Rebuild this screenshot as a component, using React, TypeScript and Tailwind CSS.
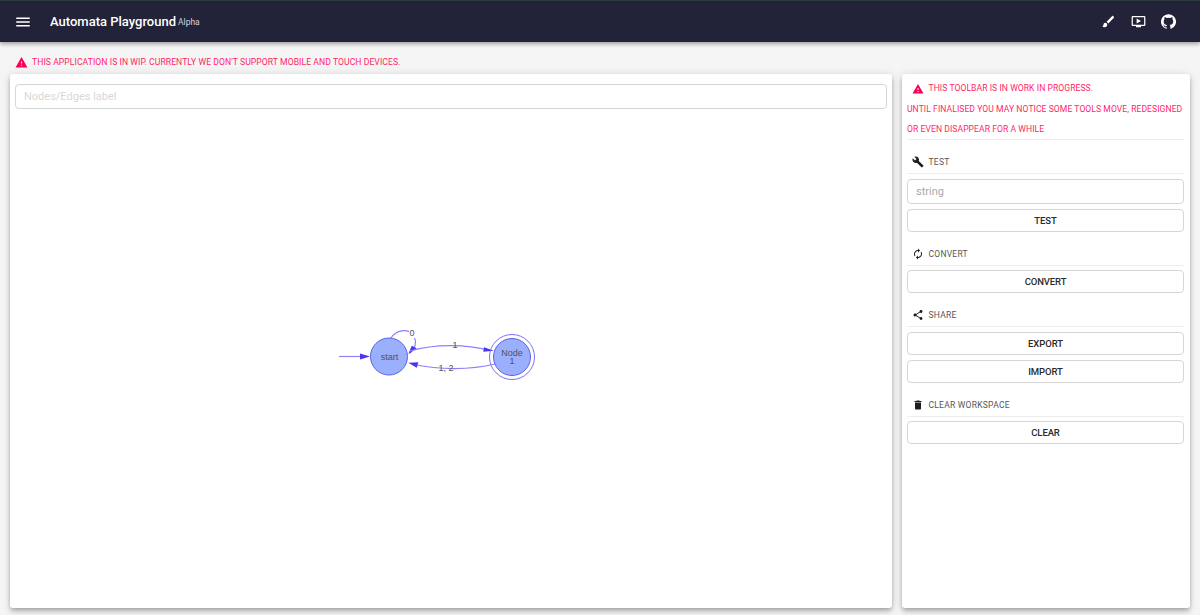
const paths = {
  menu: 'M3 18h18v-2H3v2zm0-5h18v-2H3v2zm0-7v2h18V6H3z',
  warning: 'M1 21h22L12 2 1 21zm12-3h-2v-2h2v2zm0-4h-2v-4h2v4z',
  brush:
    'M7 14c-1.66 0-3 1.34-3 3 0 1.31-1.16 2-2 2 .92 1.22 2.49 2 4 2 2.21 0 4-1.79 4-4 0-1.66-1.34-3-3-3zm13.71-9.37l-1.34-1.34c-.39-.39-1.02-.39-1.41 0L9 12.25 11.75 15l8.96-8.96c.39-.39.39-1.02 0-1.41z',
  video:
    'M21 3H3c-1.11 0-2 .89-2 2v12c0 1.1.89 2 2 2h5v2h8v-2h5c1.1 0 1.99-.9 1.99-2L23 5c0-1.11-.9-2-2-2zm0 14H3V5h18v12zm-5-6l-7 4V7z',
  github:
    'M12 .3a12 12 0 0 0-3.8 23.4c.6.1.8-.3.8-.6v-2c-3.3.7-4-1.6-4-1.6-.6-1.4-1.4-1.8-1.4-1.8-1-.7.1-.7.1-.7 1.2 0 1.9 1.2 1.9 1.2 1 1.8 2.8 1.3 3.5 1 0-.8.4-1.3.7-1.6-2.7-.3-5.5-1.3-5.5-6 0-1.2.5-2.3 1.3-3.1-.2-.4-.6-1.6 0-3.2 0 0 1-.3 3.4 1.2a11.5 11.5 0 0 1 6 0c2.3-1.5 3.3-1.2 3.3-1.2.6 1.6.2 2.8 0 3.2.9.8 1.3 1.9 1.3 3.2 0 4.6-2.8 5.6-5.5 5.9.5.4.9 1 .9 2.2v3.3c0 .3.1.7.8.6A12 12 0 0 0 12 .3',
  build:
    'M22.7 19l-9.1-9.1c.9-2.3.4-5-1.5-6.9-2-2-5-2.4-7.4-1.3L9 6 6 9 1.6 4.7C.4 7.1.9 10.1 2.9 12.1c1.9 1.9 4.6 2.4 6.9 1.5l9.1 9.1c.4.4 1 .4 1.4 0l2.3-2.3c.5-.4.5-1.1.1-1.4z',
  autorenew:
    'M12 6v3l4-4-4-4v3c-4.42 0-8 3.58-8 8 0 1.57.46 3.03 1.24 4.26L6.7 14.8c-.45-.83-.7-1.79-.7-2.8 0-3.31 2.69-6 6-6zm6.76 1.74L17.3 9.2c.44.84.7 1.79.7 2.8 0 3.31-2.69 6-6 6v-3l-4 4 4 4v-3c4.42 0 8-3.58 8-8 0-1.57-.46-3.03-1.24-4.26z',
  share:
    'M18 16.08c-.76 0-1.44.3-1.96.77L8.91 12.7c.05-.23.09-.46.09-.7s-.04-.47-.09-.7l7.05-4.11c.54.5 1.25.81 2.04.81 1.66 0 3-1.34 3-3s-1.34-3-3-3-3 1.34-3 3c0 .24.04.47.09.7L8.04 9.81C7.5 9.31 6.79 9 6 9c-1.66 0-3 1.34-3 3s1.34 3 3 3c.79 0 1.5-.31 2.04-.81l7.12 4.16c-.05.21-.08.43-.08.65 0 1.61 1.31 2.92 2.92 2.92 1.61 0 2.92-1.31 2.92-2.92s-1.31-2.92-2.92-2.92z',
  trash: 'M6 19c0 1.1.9 2 2 2h8c1.1 0 2-.9 2-2V7H6v12zM19 4h-3.5l-1-1h-5l-1 1H5v2h14V4z'
}

function Icon({ d, className }: { d: string; className: string }): React.JSX.Element {
  return (
    <svg viewBox="0 0 24 24" fill="currentColor" className={className}>
      <path d={d} />
    </svg>
  )
}

function Header(): React.JSX.Element {
  return (
    <header className="relative flex h-[42px] shrink-0 items-center border-t border-[#2c3a3c] bg-[#222339] pl-[14px] pr-[24px] text-white shadow-[0_2px_4px_rgba(0,0,0,0.35)]">
      <Icon d={paths.menu} className="h-[18px] w-[18px]" />
      <span className="ml-[18px] text-[13px] font-medium">Automata Playground</span>
      <span className="ml-[2px] pt-[1px] text-[8.5px] text-gray-300">Alpha</span>
      <div className="ml-auto flex items-center gap-[15px]">
        <Icon d={paths.brush} className="h-[15px] w-[15px]" />
        <Icon d={paths.video} className="h-[15px] w-[15px]" />
        <Icon d={paths.github} className="h-[15px] w-[15px]" />
      </div>
    </header>
  )
}

function Graph(): React.JSX.Element {
  const edge = '#8f80fb'
  const head = '#4a35ee'
  return (
    <svg viewBox="0 0 220 70" className="absolute left-[320px] top-[246px] h-[70px] w-[220px] font-['Liberation_Sans',sans-serif]">
      <path d="M9 36.5 H34" stroke={edge} strokeWidth="1.2" fill="none" />
      <path d="M30 33.5 L40 36.5 L30 39.5 Z" fill={head} />
      <path d="M61 18 C 66 10 78 8 83 15 C 87 21 86 28 80 33" stroke={edge} strokeWidth="1.2" fill="none" />
      <path d="M81.7 25.7 L86.7 28.3 L78.3 34.3 Z" fill={head} />
      <path d="M80 31 C 105 24 135 24 160 30.5" stroke={edge} strokeWidth="1.2" fill="none" />
      <path d="M154 27.3 L164 30.7 L153.3 31.7 Z" fill={head} />
      <path d="M165 44 C 140 50 110 50 84 44.5" stroke={edge} strokeWidth="1.2" fill="none" />
      <path d="M88.3 42.3 L78.3 42.7 L86.7 47.7 Z" fill={head} />
      <circle cx="59" cy="36.5" r="18.5" fill="#9bb0fc" stroke="#5f5fe6" strokeWidth="1" />
      <circle cx="182" cy="37" r="18.5" fill="#9bb0fc" stroke="#5f5fe6" strokeWidth="1" />
      <circle cx="182" cy="37" r="22.5" fill="none" stroke="#7e70f6" strokeWidth="1" />
      <g fill="#4d5260" fontSize="9" textAnchor="middle">
        <text x="59.5" y="39.5">start</text>
        <text x="182" y="35.5">Node</text>
        <text x="182" y="44">1</text>
        <rect x="79" y="8" width="6" height="10" fill="#fff" />
        <text x="82" y="16">0</text>
        <text x="125" y="28">1</text>
        <text x="116" y="51">1, 2</text>
      </g>
    </svg>
  )
}

function Section({
  icon,
  label,
  className = 'mt-[10px]'
}: {
  icon: string
  label: string
  className?: string
}): React.JSX.Element {
  return (
    <div className={`flex h-[24px] items-center border-b border-[#eeeeee] pl-[5px] ${className}`}>
      <Icon d={icon} className="h-[12px] w-[12px] text-[#1d1d1d]" />
      <span className="ml-[4.5px] pt-[1px] text-[8.5px] tracking-[0.25px] text-[#555555]">{label}</span>
    </div>
  )
}

function ToolButton({ label, className }: { label: string; className: string }): React.JSX.Element {
  return (
    <button className={`flex h-[23px] w-full items-center justify-center rounded-[4px] border border-[#d6d6d6] bg-white pt-[1px] text-[9.5px] font-medium tracking-[-0.1px] text-[#2a2a2a] ${className}`}>
      {label}
    </button>
  )
}

const elevation =
  'shadow-[0_2px_4px_-1px_rgba(0,0,0,0.2),0_4px_5px_0_rgba(0,0,0,0.14),0_1px_10px_0_rgba(0,0,0,0.12)]'

export default function App(): React.JSX.Element {
  return (
    <div className="flex h-[615px] w-[1200px] flex-col overflow-hidden bg-[#f5f5f5] font-['Roboto',sans-serif]">
      <Header />
      <div className="flex h-[32px] shrink-0 items-center pl-[15px] pt-[8px]">
        <Icon d={paths.warning} className="h-[13px] w-[13px] text-[#ff0055]" />
        <span className="ml-[4px] text-[8.6px] tracking-[0.07px] text-[#ff1f66]">
          THIS APPLICATION IS IN WIP. CURRENTLY WE DON'T SUPPORT MOBILE AND TOUCH DEVICES.
        </span>
      </div>
      <main className="flex h-[534px] gap-[10px] px-[10px]">
        <section className={`relative w-[882px] rounded-[3px] bg-white p-[5px] pt-[10px] ${elevation}`}>
          <div className="flex h-[25px] items-center rounded-[4px] border border-[#d6d6d6] pl-[8px] pt-[1px] text-[11px] text-[#d8d8d8]">
            Nodes/Edges label
          </div>
          <Graph />
        </section>
        <aside className={`w-[288px] rounded-[3px] bg-white pl-[5px] pr-[6px] pt-[4px] ${elevation}`}>
          <div className="border-b border-[#eeeeee] text-[8.6px] tracking-[0.05px] text-[#ff1f66]">
            <div className="flex h-[20px] items-center pl-[5px] pt-[1px]">
              <Icon d={paths.warning} className="h-[12px] w-[12px] text-[#ff0055]" />
              <span className="ml-[4.5px]">THIS TOOLBAR IS IN WORK IN PROGRESS.</span>
            </div>
            <div className="flex h-[21px] items-center whitespace-nowrap pt-[1px]">
              UNTIL FINALISED YOU MAY NOTICE SOME TOOLS MOVE, REDESIGNED
            </div>
            <div className="flex h-[20px] items-center">OR EVEN DISAPPEAR FOR A WHILE</div>
          </div>
          <Section icon={paths.build} label="TEST" />
          <div className="mt-[5px] flex h-[25px] items-center rounded-[4px] border border-[#d6d6d6] pl-[8px] pt-[1px] text-[11px] text-[#a9a9a9]">
            string
          </div>
          <ToolButton label="TEST" className="mt-[5px]" />
          <Section icon={paths.autorenew} label="CONVERT" />
          <ToolButton label="CONVERT" className="mt-[4px]" />
          <Section icon={paths.share} label="SHARE" />
          <ToolButton label="EXPORT" className="mt-[5px]" />
          <ToolButton label="IMPORT" className="mt-[5px]" />
          <Section icon={paths.trash} label="CLEAR WORKSPACE" />
          <ToolButton label="CLEAR" className="mt-[4px]" />
        </aside>
      </main>
    </div>
  )
}
